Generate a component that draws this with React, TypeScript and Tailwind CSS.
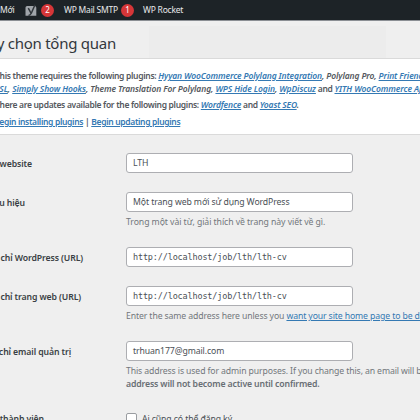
import React, { ReactNode } from "react";

const A = ({ children }: { children: ReactNode }) => (
  <a className="text-[#3479b3] underline decoration-[0.7px] underline-offset-[1px]">{children}</a>
);

const Badge = ({ n }: { n: number }) => (
  <span className="flex h-[13px] w-[13px] shrink-0 items-center justify-center rounded-full bg-[#d63638] text-[8px] leading-none text-white">
    {n}
  </span>
);

/* Label column: right edge of the text sits at the given width, the start runs off the page. */
const Label = ({ w, children }: { w: string; children: ReactNode }) => (
  <div className="h-[22px] w-[126px] shrink-0 overflow-hidden">
    <div className={"flex justify-end font-semibold leading-[22px] text-[#3a3f44] " + w}>{children}</div>
  </div>
);

const Field = ({ value, cls = "pt-[1px]" }: { value: string; cls?: string }) => (
  <div className={"flex h-[20px] w-[227px] items-center rounded-[3px] border border-[#adaeb2] bg-white pl-[6px] text-[#4a5056] " + cls}>
    {value}
  </div>
);

const Yoast = () => (
  <svg viewBox="0 0 12 13" className="h-[13px] w-[12px]">
    <path d="M2.2 2H9.6Q11.3 2.2 11.3 3.8V11.8H.5V3.8Q.5 2 2.2 2Z" fill="#a0a5aa" />
    <path d="M3.3 4.2 5.9 9M10 .8 6.3 9.3C5.6 10.8 4.9 11.3 3.5 11.4" fill="none" stroke="#30363b" strokeWidth="1.5" />
  </svg>
);

export default function App() {
  return (
    <div className="h-[420px] w-[420px] overflow-hidden whitespace-nowrap bg-[#efefef] font-['Noto_Sans',sans-serif] text-[8.7px] tracking-[-0.1px]">
      <header className="flex h-[21px] items-center border-b border-[#8b8f94] bg-[#1d2327] text-[8.5px] tracking-[-0.22px] text-[#e8e9ea]">
        <span className="w-[25px]">Mới</span>
        <Yoast />
        <span className="ml-[4px]"><Badge n={2} /></span>
        <span className="ml-[10px] w-[57px]">WP Mail SMTP</span>
        <Badge n={1} />
        <span className="ml-[9px]">WP Rocket</span>
      </header>

      <section className="flex h-[37px]">
        <div className="w-[149px] shrink-0 overflow-hidden">
          <h1 className="flex w-[116px] justify-end pt-[10px] text-[15px] leading-[24px] tracking-[-0.25px] text-[#33383d]">Tùy chọn tổng quan</h1>
        </div>
        <div className="mt-[5px] h-[32px] w-[237px] bg-[#ececec]" />
      </section>

      <section className="h-[77px] overflow-hidden border-y border-[#dadada] bg-white pt-[10px] text-[8.5px] font-semibold leading-[13px] tracking-[-0.31px] text-[#54585d]">
        <div className="-ml-[5px]">
          This theme requires the following plugins: <i className="tracking-[-0.13px]"><A>Hyyan WooCommerce Polylang Integration</A>, Polylang Pro, <A>Print Friendly</A></i>
        </div>
        <div className="-ml-[5px]">
          <i className="tracking-[-0.1px]"><A>SSL</A>, <A>Simply Show Hooks</A>, Theme Translation For Polylang, <A>WPS Hide Login</A>, <A>WpDiscuz</A></i> and <i className="tracking-[-0.1px]"><A>YITH WooCommerce Ajax</A></i>
        </div>
        <div className="-ml-[5px] mt-[3px]">
          There are updates available for the following plugins: <i className="tracking-[-0.15px]"><A>Wordfence</A></i> and <i className="tracking-[-0.15px]"><A>Yoast SEO</A>.</i>
        </div>
        <div className="-ml-[6px] mt-[4px] tracking-[-0.33px]">
          <A>Begin installing plugins</A> | <A>Begin updating plugins</A>
        </div>
      </section>

      <main className="flex flex-col">
        <div className="flex h-[39px] pt-[18px]">
          <Label w="w-[32px]">Tên website</Label>
          <Field value="LTH" />
        </div>
        <div className="flex h-[55px] pt-[18px]">
          <Label w="w-[25px]">Khẩu hiệu</Label>
          <div>
            <Field value="Một trang web mới sử dụng WordPress" />
            <p className="leading-[20px] tracking-[-0.07px] text-[#72777c]">Trong một vài từ, giải thích về trang này viết về gì.</p>
          </div>
        </div>
        <div className="flex h-[39px] pt-[18px]">
          <Label w="w-[83px]">Địa chỉ WordPress (URL)</Label>
          <Field value="http://localhost/job/lth/lth-cv" cls="font-['DejaVu_Sans_Mono',monospace] text-[8.5px] tracking-[-0.16px]" />
        </div>
        <div className="flex h-[55px] pt-[18px]">
          <Label w="w-[81px]">Địa chỉ trang web (URL)</Label>
          <div>
            <Field value="http://localhost/job/lth/lth-cv" cls="font-['DejaVu_Sans_Mono',monospace] text-[8.5px] tracking-[-0.16px]" />
            <p className="leading-[20px] tracking-[-0.12px] text-[#72777c]">Enter the same address here unless you <A>want your site home page to be different</A></p>
          </div>
        </div>
        <div className="flex h-[72px] pt-[18px]">
          <Label w="w-[71px]">Địa chỉ email quản trị</Label>
          <div>
            <Field value="trhuan177@gmail.com" />
            <p className="pt-[4px] leading-[13px] tracking-[-0.12px] text-[#72777c]">
              This address is used for admin purposes. If you change this, an email will be sent<br />
              <b className="font-semibold tracking-[-0.14px] text-[#686e74]">address will not become active until confirmed.</b>
            </p>
          </div>
        </div>
        <div className="flex pt-[18px]">
          <div className="-mt-[5px]"><Label w="w-[44px]">Tư cách thành viên</Label></div>
          <span className="h-[11px] w-[11px] rounded-[2px] border border-[#9a9da1] bg-white" />
          <span className="ml-[5px] leading-[12px] text-[#4a5056]">Ai cũng có thể đăng ký</span>
        </div>
      </main>
    </div>
  );
}
